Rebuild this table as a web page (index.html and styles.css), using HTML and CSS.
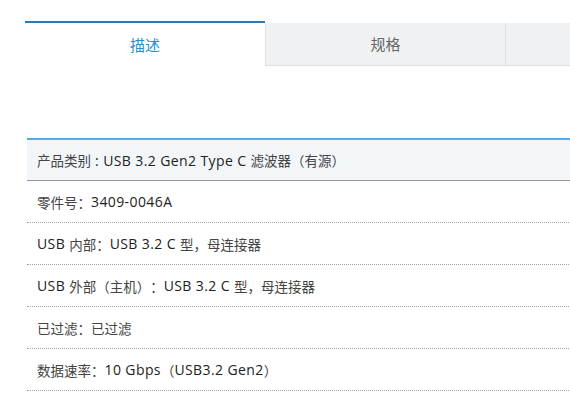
FILE: index.html
```html
<!DOCTYPE html>
<html>
<head>
<meta charset="utf-8">
<link rel="stylesheet" href="styles.css">
</head>
<body>
<div class="page">
  <div class="tabs">
    <div class="tab active">描述</div>
    <div class="tab">规格</div>
    <div class="tab"></div>
  </div>
  <div class="specs">
    <div class="row head">产品类别<span class="en"> : USB 3.2 Gen2 Type C </span>滤波器（有源）</div>
    <div class="row">零件号：<span class="en">3409-0046A</span></div>
    <div class="row"><span class="en">USB </span>内部：<span class="en">USB 3.2 C </span>型，母连接器</div>
    <div class="row"><span class="en">USB </span>外部（主机）：<span class="en">USB 3.2 C </span>型，母连接器</div>
    <div class="row">已过滤：已过滤</div>
    <div class="row">数据速率：<span class="en">10 Gbps</span>（<span class="en">USB3.2 Gen2</span>）</div>
  </div>
</div>
</body>
</html>
```
FILE: styles.css
```css
html, body {
  margin: 0;
  padding: 0;
  background: #fff;
  overflow: hidden;
}
body {
  font-family: "Open Sans", "Noto Sans CJK SC", sans-serif;
  color: #333;
  text-spacing-trim: space-all;
}
.page {
  width: 570px;
  height: 400px;
  overflow: hidden;
}
.tabs {
  display: flex;
  margin: 21px 0 0 25px;
  width: 700px;
}
.tab {
  flex: 0 0 240px;
  height: 43px;
  margin-top: 2px;
  box-sizing: border-box;
  background: #f0f1f3;
  border: 1px solid #dcdee0;
  border-top: none;
  border-right: none;
  display: flex;
  align-items: center;
  justify-content: center;
  padding-bottom: 2px;
  font-size: 15px;
  color: #666;
}
.tab.active {
  height: 46px;
  margin-top: 0;
  background: #fff;
  border: none;
  border-top: 2px solid #2a78b4;
  color: #2a8fd0;
}
.specs {
  margin: 71px 0 0 27px;
  width: 560px;
}
.row {
  height: 42px;
  box-sizing: border-box;
  border-bottom: 1px dotted #9aa4ab;
  display: flex;
  align-items: center;
  padding-left: 10px;
  font-size: 13.5px;
  color: #444;
  white-space: pre;
}
.en {
  font-family: "Open Sans", sans-serif;
  font-size: 14px;
  letter-spacing: 0.4px;
  color: #222;
}
.row.head {
  background: #f3f6f9;
  border-top: 2px solid #5aa8e4;
  border-bottom: 1px solid #8d9aa3;
  height: 43px;
}
```
